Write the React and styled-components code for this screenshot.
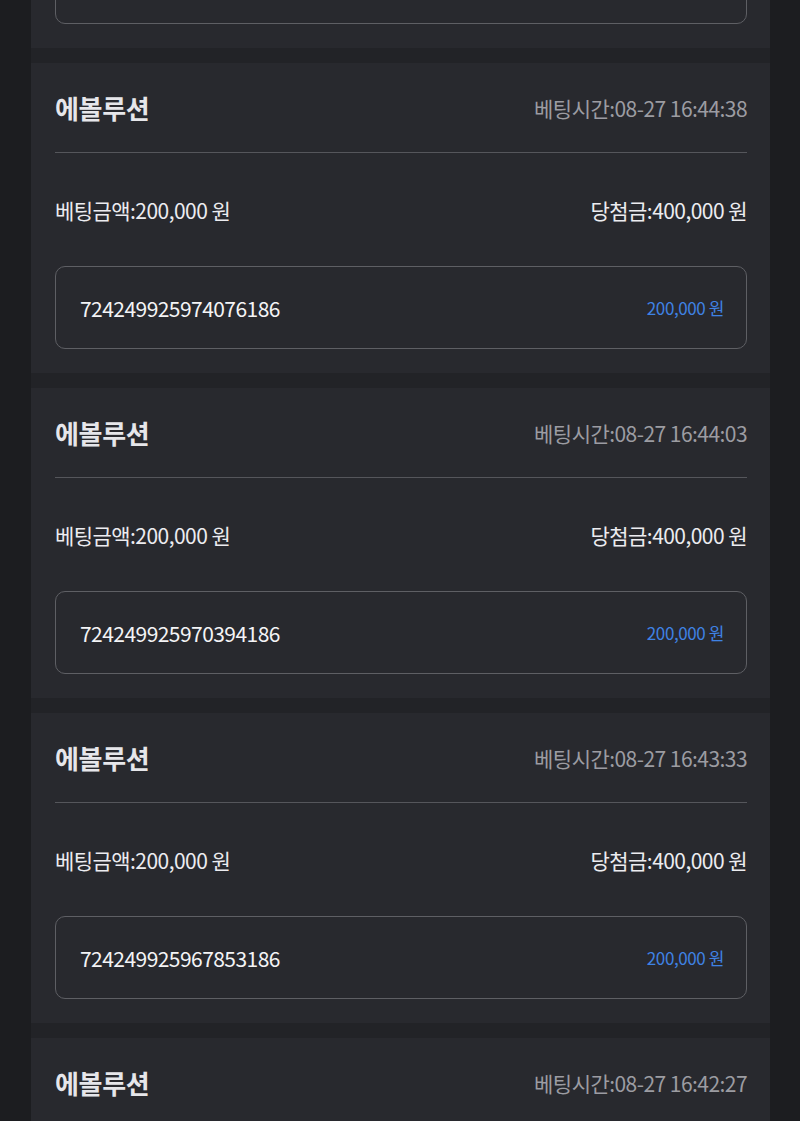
import React from 'react'
import styled, {createGlobalStyle} from 'styled-components'

const GlobalStyle = createGlobalStyle`
  html, body {
    margin: 0;
    padding: 0;
    background: #1c1d20;
    font-family: "Noto Sans CJK KR", "Noto Sans", sans-serif;
    overflow: hidden;
  }
`

const List = styled.div`
  display: flex;
  flex-direction: column;
  gap: 15px;
  width: 739px;
  margin: -262px 0 0 31px;
  background: #222327;
`

const Card = styled.div`
  background: #28292e;
  padding: 0 23px 24px 24px;
`

const Header = styled.div`
  display: flex;
  align-items: center;
  justify-content: space-between;
  height: 89px;
  border-bottom: 1px solid #55565b;
`

const Title = styled.div`
  font-size: 26px;
  font-weight: 700;
  color: #e6e6ea;
  letter-spacing: -0.3px;
`

const Time = styled.div`
  font-size: 21px;
  color: #9c9ca2;
  letter-spacing: -0.55px;
`

const Amounts = styled.div`
  display: flex;
  justify-content: space-between;
  align-items: center;
  height: 28px;
  padding-top: 43px;
  margin-bottom: 42px;
  font-size: 21px;
  color: #ececf0;
  letter-spacing: -0.55px;
`

const Ticket = styled.div`
  display: flex;
  align-items: center;
  justify-content: space-between;
  box-sizing: border-box;
  height: 83px;
  padding: 0 22px 0 24px;
  border: 1px solid #5e5f64;
  border-radius: 10px;
`

const TicketId = styled.div`
  font-size: 21px;
  color: #f4f4f6;
  letter-spacing: -0.55px;
`

const TicketAmount = styled.div`
  font-size: 17px;
  color: #3f82e4;
  letter-spacing: -0.4px;
`

const bets = [
  {time: '08-27 16:45:02', id: '724249925977758186'},
  {time: '08-27 16:44:38', id: '724249925974076186'},
  {time: '08-27 16:44:03', id: '724249925970394186'},
  {time: '08-27 16:43:33', id: '724249925967853186'},
  {time: '08-27 16:42:27', id: '724249925961236186'},
]

export default function App() {
  return <>
    <GlobalStyle />
    <List>
      {bets.map(b => <Card key={b.id}>
        <Header>
          <Title>에볼루션</Title>
          <Time>베팅시간:{b.time}</Time>
        </Header>
        <Amounts>
          <span>베팅금액:200,000 원</span>
          <span>당첨금:400,000 원</span>
        </Amounts>
        <Ticket>
          <TicketId>{b.id}</TicketId>
          <TicketAmount>200,000 원</TicketAmount>
        </Ticket>
      </Card>)}
    </List>
  </>
}
